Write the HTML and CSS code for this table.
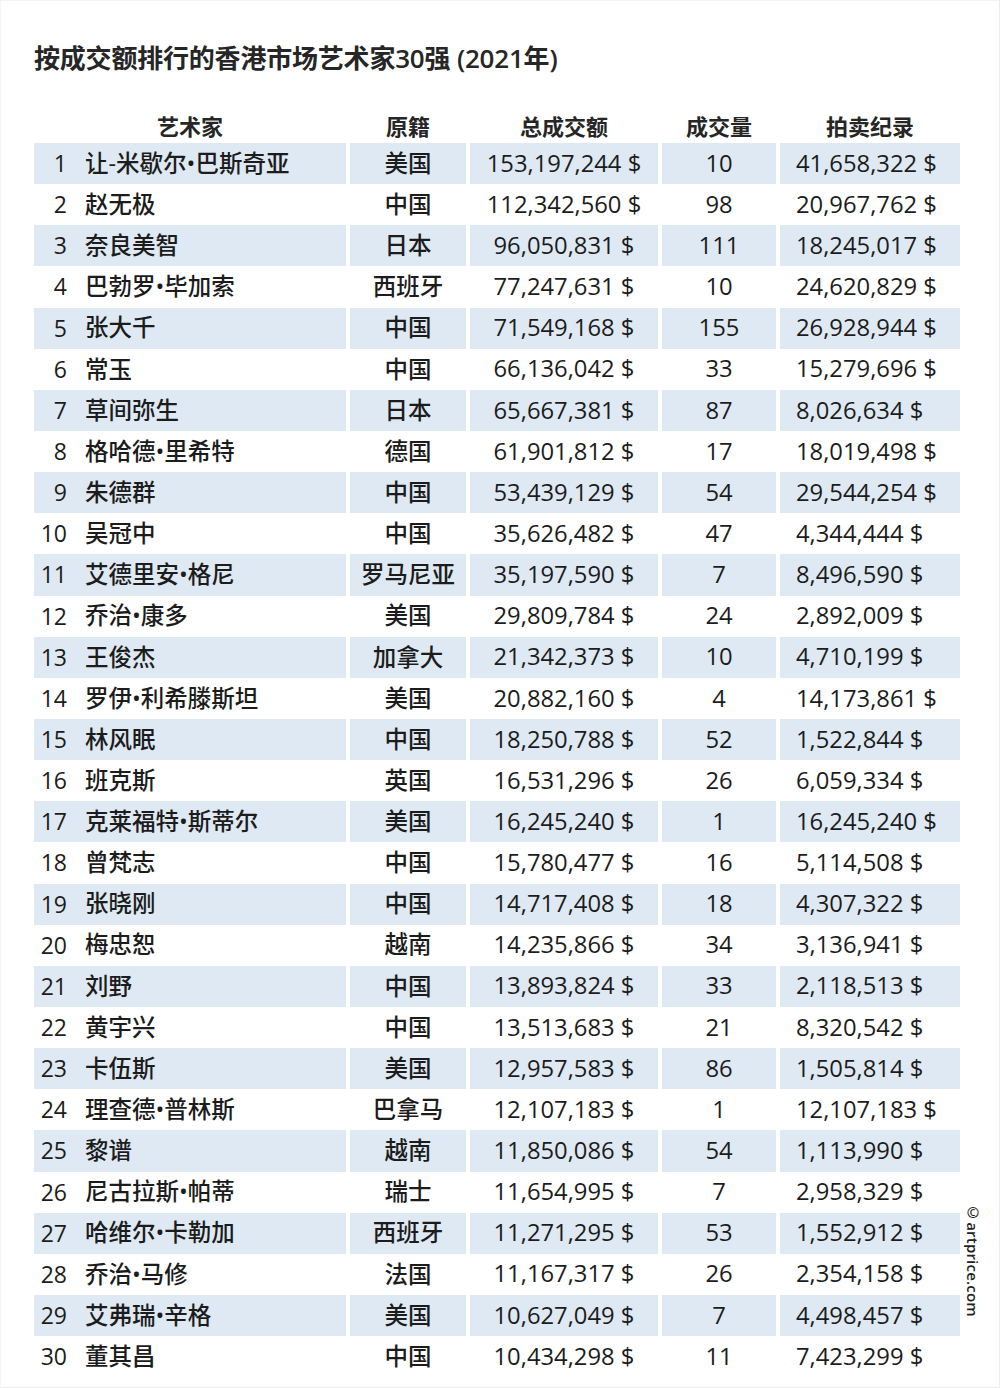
FILE: index.html
```html
<!DOCTYPE html>
<html lang="zh">
<head>
<meta charset="utf-8">
<title>按成交额排行的香港市场艺术家30强</title>
<link rel="stylesheet" href="styles.css">
</head>
<body>
<div class="page">
  <h1 class="title">按成交额排行的香港市场艺术家30强 (2021年)</h1>
  <div class="table">
    <div class="row head">
      <div class="cell name-head">艺术家</div>
      <div class="cell c">原籍</div>
      <div class="cell c">总成交额</div>
      <div class="cell c">成交量</div>
      <div class="cell c">拍卖纪录</div>
    </div>
    <div class="row shade"><div class="cell name"><span class="rank">1</span><span>让-米歇尔•巴斯奇亚</span></div><div class="cell c">美国</div><div class="cell c num">153,197,244 $</div><div class="cell c num">10</div><div class="cell l num">41,658,322 $</div></div>
    <div class="row"><div class="cell name"><span class="rank">2</span><span>赵无极</span></div><div class="cell c">中国</div><div class="cell c num">112,342,560 $</div><div class="cell c num">98</div><div class="cell l num">20,967,762 $</div></div>
    <div class="row shade"><div class="cell name"><span class="rank">3</span><span>奈良美智</span></div><div class="cell c">日本</div><div class="cell c num">96,050,831 $</div><div class="cell c num">111</div><div class="cell l num">18,245,017 $</div></div>
    <div class="row"><div class="cell name"><span class="rank">4</span><span>巴勃罗•毕加索</span></div><div class="cell c">西班牙</div><div class="cell c num">77,247,631 $</div><div class="cell c num">10</div><div class="cell l num">24,620,829 $</div></div>
    <div class="row shade"><div class="cell name"><span class="rank">5</span><span>张大千</span></div><div class="cell c">中国</div><div class="cell c num">71,549,168 $</div><div class="cell c num">155</div><div class="cell l num">26,928,944 $</div></div>
    <div class="row"><div class="cell name"><span class="rank">6</span><span>常玉</span></div><div class="cell c">中国</div><div class="cell c num">66,136,042 $</div><div class="cell c num">33</div><div class="cell l num">15,279,696 $</div></div>
    <div class="row shade"><div class="cell name"><span class="rank">7</span><span>草间弥生</span></div><div class="cell c">日本</div><div class="cell c num">65,667,381 $</div><div class="cell c num">87</div><div class="cell l num">8,026,634 $</div></div>
    <div class="row"><div class="cell name"><span class="rank">8</span><span>格哈德•里希特</span></div><div class="cell c">德国</div><div class="cell c num">61,901,812 $</div><div class="cell c num">17</div><div class="cell l num">18,019,498 $</div></div>
    <div class="row shade"><div class="cell name"><span class="rank">9</span><span>朱德群</span></div><div class="cell c">中国</div><div class="cell c num">53,439,129 $</div><div class="cell c num">54</div><div class="cell l num">29,544,254 $</div></div>
    <div class="row"><div class="cell name"><span class="rank">10</span><span>吴冠中</span></div><div class="cell c">中国</div><div class="cell c num">35,626,482 $</div><div class="cell c num">47</div><div class="cell l num">4,344,444 $</div></div>
    <div class="row shade"><div class="cell name"><span class="rank">11</span><span>艾德里安•格尼</span></div><div class="cell c">罗马尼亚</div><div class="cell c num">35,197,590 $</div><div class="cell c num">7</div><div class="cell l num">8,496,590 $</div></div>
    <div class="row"><div class="cell name"><span class="rank">12</span><span>乔治•康多</span></div><div class="cell c">美国</div><div class="cell c num">29,809,784 $</div><div class="cell c num">24</div><div class="cell l num">2,892,009 $</div></div>
    <div class="row shade"><div class="cell name"><span class="rank">13</span><span>王俊杰</span></div><div class="cell c">加拿大</div><div class="cell c num">21,342,373 $</div><div class="cell c num">10</div><div class="cell l num">4,710,199 $</div></div>
    <div class="row"><div class="cell name"><span class="rank">14</span><span>罗伊•利希滕斯坦</span></div><div class="cell c">美国</div><div class="cell c num">20,882,160 $</div><div class="cell c num">4</div><div class="cell l num">14,173,861 $</div></div>
    <div class="row shade"><div class="cell name"><span class="rank">15</span><span>林风眠</span></div><div class="cell c">中国</div><div class="cell c num">18,250,788 $</div><div class="cell c num">52</div><div class="cell l num">1,522,844 $</div></div>
    <div class="row"><div class="cell name"><span class="rank">16</span><span>班克斯</span></div><div class="cell c">英国</div><div class="cell c num">16,531,296 $</div><div class="cell c num">26</div><div class="cell l num">6,059,334 $</div></div>
    <div class="row shade"><div class="cell name"><span class="rank">17</span><span>克莱福特•斯蒂尔</span></div><div class="cell c">美国</div><div class="cell c num">16,245,240 $</div><div class="cell c num">1</div><div class="cell l num">16,245,240 $</div></div>
    <div class="row"><div class="cell name"><span class="rank">18</span><span>曾梵志</span></div><div class="cell c">中国</div><div class="cell c num">15,780,477 $</div><div class="cell c num">16</div><div class="cell l num">5,114,508 $</div></div>
    <div class="row shade"><div class="cell name"><span class="rank">19</span><span>张晓刚</span></div><div class="cell c">中国</div><div class="cell c num">14,717,408 $</div><div class="cell c num">18</div><div class="cell l num">4,307,322 $</div></div>
    <div class="row"><div class="cell name"><span class="rank">20</span><span>梅忠恕</span></div><div class="cell c">越南</div><div class="cell c num">14,235,866 $</div><div class="cell c num">34</div><div class="cell l num">3,136,941 $</div></div>
    <div class="row shade"><div class="cell name"><span class="rank">21</span><span>刘野</span></div><div class="cell c">中国</div><div class="cell c num">13,893,824 $</div><div class="cell c num">33</div><div class="cell l num">2,118,513 $</div></div>
    <div class="row"><div class="cell name"><span class="rank">22</span><span>黄宇兴</span></div><div class="cell c">中国</div><div class="cell c num">13,513,683 $</div><div class="cell c num">21</div><div class="cell l num">8,320,542 $</div></div>
    <div class="row shade"><div class="cell name"><span class="rank">23</span><span>卡伍斯</span></div><div class="cell c">美国</div><div class="cell c num">12,957,583 $</div><div class="cell c num">86</div><div class="cell l num">1,505,814 $</div></div>
    <div class="row"><div class="cell name"><span class="rank">24</span><span>理查德•普林斯</span></div><div class="cell c">巴拿马</div><div class="cell c num">12,107,183 $</div><div class="cell c num">1</div><div class="cell l num">12,107,183 $</div></div>
    <div class="row shade"><div class="cell name"><span class="rank">25</span><span>黎谱</span></div><div class="cell c">越南</div><div class="cell c num">11,850,086 $</div><div class="cell c num">54</div><div class="cell l num">1,113,990 $</div></div>
    <div class="row"><div class="cell name"><span class="rank">26</span><span>尼古拉斯•帕蒂</span></div><div class="cell c">瑞士</div><div class="cell c num">11,654,995 $</div><div class="cell c num">7</div><div class="cell l num">2,958,329 $</div></div>
    <div class="row shade"><div class="cell name"><span class="rank">27</span><span>哈维尔•卡勒加</span></div><div class="cell c">西班牙</div><div class="cell c num">11,271,295 $</div><div class="cell c num">53</div><div class="cell l num">1,552,912 $</div></div>
    <div class="row"><div class="cell name"><span class="rank">28</span><span>乔治•马修</span></div><div class="cell c">法国</div><div class="cell c num">11,167,317 $</div><div class="cell c num">26</div><div class="cell l num">2,354,158 $</div></div>
    <div class="row shade"><div class="cell name"><span class="rank">29</span><span>艾弗瑞•辛格</span></div><div class="cell c">美国</div><div class="cell c num">10,627,049 $</div><div class="cell c num">7</div><div class="cell l num">4,498,457 $</div></div>
    <div class="row"><div class="cell name"><span class="rank">30</span><span>董其昌</span></div><div class="cell c">中国</div><div class="cell c num">10,434,298 $</div><div class="cell c num">11</div><div class="cell l num">7,423,299 $</div></div>
  </div>
  <div class="credit">©artprice.com</div>
</div>
</body>
</html>
```

FILE: styles.css
```css
* { box-sizing: border-box; }
html, body { margin: 0; padding: 0; background: #ffffff; }
body {
  font-family: "Open Sans", "Noto Sans CJK SC", "Noto Sans", sans-serif;
  color: #1c1c1c;
}
.page {
  position: relative;
  width: 1000px;
  height: 1388px;
  border: 1px solid #ececec;
  border-top-color: #f3f3f3;
  border-left-color: #f6f6f6;
  padding: 37px 0 0 33px;
}
.title {
  margin: 0;
  font-size: 26px;
  line-height: 40px;
  font-weight: 600;
  color: #262626;
  letter-spacing: -0.2px;
}
.table {
  margin-top: 33px;
  width: 926px;
}
.row {
  display: grid;
  grid-template-columns: 312px 116px 188px 114px 180px;
  column-gap: 4px;
  height: 41.15px;
}
.row.head {
  height: 32px;
  align-items: end;
}
.row.head .cell {
  font-size: 22px;
  font-weight: 600;
  color: #262626;
  line-height: 30px;
  padding-bottom: 2px;
}
.cell {
  display: flex;
  align-items: center;
  font-size: 23.5px;
  font-weight: 500;
  line-height: 1;
  white-space: nowrap;
}
.row.head .cell { align-items: flex-end; }
.shade .cell { background: #dee9f3; }
.c { justify-content: center; }
.l { justify-content: flex-start; padding-left: 16px; }
.name-head { justify-content: center; }
.rank {
  width: 33px;
  text-align: right;
  margin-right: 18px;
  font-size: 23px;
}
.num { font-size: 23.8px; }
.credit {
  position: absolute;
  right: 16px;
  top: 1201px;
  writing-mode: vertical-rl;
  font-size: 15px;
  font-weight: 600;
  color: #222;
  letter-spacing: 0.2px;
}
```
